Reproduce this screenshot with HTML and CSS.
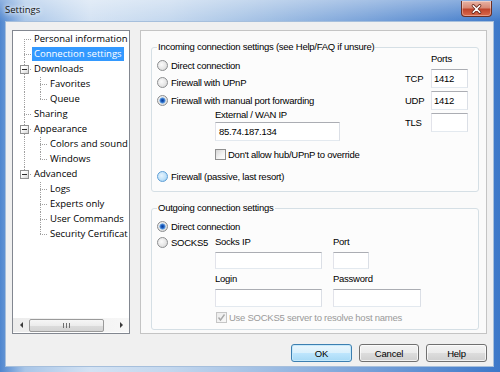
FILE: index.html
```html
<!DOCTYPE html>
<html>
<head>
<meta charset="utf-8">
<title>Settings</title>
<link rel="stylesheet" href="styles.css">
</head>
<body>
<div class="win">
  <div class="titlebar">
    <span class="title">Settings</span>
    <span class="close">
      <svg width="31" height="16" viewBox="0 0 31 16">
        <path d="M12 4.5 L19 11.5 M19 4.5 L12 11.5" stroke="#6b2a1e" stroke-width="3.4" stroke-linecap="round" fill="none"/>
        <path d="M12 4.5 L19 11.5 M19 4.5 L12 11.5" stroke="#ffffff" stroke-width="1.7" stroke-linecap="round" fill="none"/>
      </svg>
    </span>
  </div>
  <div class="client">
    <div class="main">
      <div class="tree">
        <div class="list">
          <div class="row"><i class="g first"></i><span class="t">Personal information</span></div>
          <div class="row"><i class="g tee"></i><span class="t sel">Connection settings</span></div>
          <div class="row"><i class="g tee"><b class="box"></b></i><span class="t">Downloads</span></div>
          <div class="row"><i class="g pipe"></i><i class="g tee"></i><span class="t">Favorites</span></div>
          <div class="row"><i class="g pipe"></i><i class="g last"></i><span class="t">Queue</span></div>
          <div class="row"><i class="g tee"></i><span class="t">Sharing</span></div>
          <div class="row"><i class="g tee"><b class="box"></b></i><span class="t">Appearance</span></div>
          <div class="row"><i class="g pipe"></i><i class="g tee"></i><span class="t">Colors and sound</span></div>
          <div class="row"><i class="g pipe"></i><i class="g last"></i><span class="t">Windows</span></div>
          <div class="row"><i class="g last"><b class="box"></b></i><span class="t">Advanced</span></div>
          <div class="row"><i class="g blank"></i><i class="g tee"></i><span class="t">Logs</span></div>
          <div class="row"><i class="g blank"></i><i class="g tee"></i><span class="t">Experts only</span></div>
          <div class="row"><i class="g blank"></i><i class="g tee"></i><span class="t">User Commands</span></div>
          <div class="row"><i class="g blank"></i><i class="g last"></i><span class="t">Security Certificat</span></div>
        </div>
        <div class="hscroll">
          <span class="arr"><span class="tri-l"></span></span>
          <span class="thumb">
            <svg width="7" height="5" viewBox="0 0 7 5"><path d="M0.5 0 V5 M3.5 0 V5 M6.5 0 V5" stroke="#6f6f6f" stroke-width="1"/></svg>
          </span>
          <span class="track"></span>
          <span class="arr"><span class="tri-r"></span></span>
        </div>
      </div>

      <div class="panel">
        <fieldset class="group g1">
          <legend>Incoming connection settings (see Help/FAQ if unsure)</legend>
          <div class="g1-body">
            <div class="modes">
              <label class="opt"><span class="radio"></span>Direct connection</label>
              <label class="opt r2"><span class="radio"></span>Firewall with UPnP</label>
              <label class="opt r3"><span class="radio on"></span>Firewall with manual port forwarding</label>
              <div class="wan">
                <div class="cap">External / WAN IP</div>
                <div class="field wanip">85.74.187.134</div>
                <label class="chk-row wanchk"><span class="chk"></span>Don't allow hub/UPnP to override</label>
              </div>
              <label class="opt r4"><span class="radio hot"></span>Firewall (passive, last resort)</label>
            </div>
            <div class="ports">
              <span class="ports-cap">Ports</span>
              <span class="plabel">TCP</span><div class="field port">1412</div>
              <span class="plabel">UDP</span><div class="field port">1412</div>
              <span class="plabel">TLS</span><div class="field port"></div>
            </div>
          </div>
        </fieldset>

        <fieldset class="group g2">
          <legend>Outgoing connection settings</legend>
          <label class="opt"><span class="radio on"></span>Direct connection</label>
          <div class="socks">
            <label class="opt socks5"><span class="radio"></span>SOCKS5</label>
            <div class="socks-grid">
              <span class="cap">Socks IP</span><span class="cap">Port</span>
              <div class="field ip"></div><div class="field sport"></div>
              <span class="cap">Login</span><span class="cap">Password</span>
              <div class="field ip"></div><div class="field pw"></div>
              <label class="chk-row dis"><span class="chk on">
                <svg width="9" height="9" viewBox="0 0 9 9"><path d="M1.5 4.5 L3.5 7 L7.5 1.5" stroke="#a9a9a9" stroke-width="1.4" fill="none"/></svg>
              </span>Use SOCKS5 server to resolve host names</label>
            </div>
          </div>
        </fieldset>
      </div>
    </div>

    <div class="buttons">
      <button class="btn ok" type="button">OK</button>
      <button class="btn cancel" type="button">Cancel</button>
      <button class="btn help" type="button">Help</button>
    </div>
  </div>
</div>
</body>
</html>
```

FILE: styles.css
```css
* { box-sizing: border-box; }

html, body {
  margin: 0;
  padding: 0;
  width: 500px;
  height: 372px;
  overflow: hidden;
}

.win {
  width: 500px;
  height: 372px;
  display: flex;
  flex-direction: column;
  padding: 0 7px 6px 6px;
  background:
    linear-gradient(180deg, rgba(255,255,255,0.35) 0, rgba(255,255,255,0) 22px),
    linear-gradient(90deg, #4f86cf 0%, #a9c6e8 5%, #d3e2f3 18%, #c3d7ee 34%, #a2c0e4 52%, #7aa3d9 72%, #3d78c9 100%);
  font-family: "Liberation Sans", Arial, sans-serif;
  font-size: 9.5px;
  letter-spacing: -0.25px;
  color: #000;
}

/* title bar */
.titlebar {
  height: 22px;
  flex: none;
  display: flex;
  align-items: flex-start;
}

.title {
  font-family: "Open Sans", sans-serif;
  font-size: 9.5px;
  letter-spacing: 0;
  line-height: 20px;
  margin-left: -1px;
  color: #111;
  text-shadow: 0 0 4px #ffffff, 0 0 6px #ffffff;
}

.close {
  margin-left: auto;
  margin-right: 1px;
  margin-top: 1px;
  width: 31px;
  height: 16px;
  border: 1px solid #6b2f24;
  border-top: none;
  border-radius: 0 0 4px 4px;
  background: linear-gradient(180deg, #e8b4a6 0%, #d88a76 45%, #c0452c 55%, #d9694c 100%);
  box-shadow: inset 0 0 0 1px rgba(255,255,255,0.35);
  display: flex;
}

/* client */
.client {
  flex: 1;
  background: #f0f0f0;
  padding: 8px 6px 4px 6px;
  display: flex;
  flex-direction: column;
  box-shadow: 0 0 0 1px #a6bfdc;
}

.main {
  height: 304px;
  flex: none;
  display: flex;
  gap: 10px;
}

/* tree */
.tree {
  width: 118px;
  flex: none;
  border: 1px solid #828790;
  background: #fff;
  display: flex;
  flex-direction: column;
  overflow: hidden;
}

.list {
  flex: 1;
  padding: 1px 0 0 3px;
  white-space: nowrap;
  overflow: hidden;
  font-family: "Open Sans", sans-serif;
  font-size: 9.5px;
  letter-spacing: 0;
}

.row {
  display: flex;
  height: 15px;
}

.g {
  position: relative;
  width: 16px;
  height: 15px;
  flex: none;
}

.g::before {
  content: "";
  position: absolute;
  left: 8px;
  top: 0;
  bottom: 0;
  width: 1px;
  background: repeating-linear-gradient(180deg, #a0a0a0 0 1px, transparent 1px 2px);
}

.g::after {
  content: "";
  position: absolute;
  left: 8px;
  top: 7px;
  width: 8px;
  height: 1px;
  background: repeating-linear-gradient(90deg, #a0a0a0 0 1px, transparent 1px 2px);
}

.g.first::before { top: 7px; }
.g.last::before { bottom: 7px; }
.g.pipe::after { display: none; }
.g.blank::before, .g.blank::after { display: none; }

.box {
  position: absolute;
  left: 4px;
  top: 3px;
  width: 9px;
  height: 9px;
  border: 1px solid #919191;
  background: linear-gradient(135deg, #ffffff 30%, #d6d6d6 100%);
  z-index: 1;
}

.box::after {
  content: "";
  position: absolute;
  left: 1px;
  top: 3px;
  width: 5px;
  height: 1px;
  background: #2b2b2b;
}

.t {
  line-height: 14px;
  height: 14px;
  margin-top: 0;
  padding: 0 2px;
  color: #000;
}

.t.sel {
  background: #3399ff;
  color: #fff;
}

.hscroll {
  height: 14px;
  flex: none;
  display: flex;
  align-items: center;
  background: linear-gradient(90deg, #ececec, #f7f7f7);
  margin-bottom: 1px;
}

.arr {
  width: 16px;
  height: 14px;
  flex: none;
  display: flex;
  align-items: center;
  justify-content: center;
}

.tri-l {
  width: 0; height: 0;
  border-top: 3px solid transparent;
  border-bottom: 3px solid transparent;
  border-right: 3px solid #3a3a3a;
}

.tri-r {
  width: 0; height: 0;
  border-top: 3px solid transparent;
  border-bottom: 3px solid transparent;
  border-left: 3px solid #3a3a3a;
}

.thumb {
  width: 75px;
  height: 13px;
  flex: none;
  border: 1px solid #9a9a9a;
  border-radius: 2px;
  background: linear-gradient(180deg, #f6f6f6 0%, #ececec 50%, #dcdcdc 51%, #d4d4d4 100%);
  display: flex;
  align-items: center;
  justify-content: center;
}

.track { flex: 1; }

/* right panel */
.panel {
  flex: 1;
  border: 1px solid #c4c4c4;
  background: #fafafa;
  padding: 9px 7px 3px 10px;
  display: flex;
  flex-direction: column;
}

.group {
  margin: 0;
  min-width: 0;
  border: 1px solid #d5dfe5;
  border-radius: 3px;
  padding: 3px 10px 7px 5px;
  background: #fcfcfc;
}

.group legend {
  padding: 0 1px;
  line-height: 14px;
  height: 14px;
}

.g2 {
  margin-top: 9px;
  padding-bottom: 4px;
}

.g1-body {
  display: flex;
}

.modes {
  flex: 1;
  display: flex;
  flex-direction: column;
}

.opt {
  display: flex;
  align-items: center;
  gap: 3px;
  height: 16px;
  white-space: nowrap;
}

.r2 { margin-top: 1px; }
.r3 { margin-top: 2px; }
.r4 { margin-top: 7px; }

.radio {
  width: 11px;
  height: 11px;
  flex: none;
  border-radius: 50%;
  border: 1px solid #8c8e90;
  background: radial-gradient(circle at 40% 40%, #fbfbfb 0%, #e6e6e6 55%, #cfcfcf 100%);
}

.radio.on {
  background:
    radial-gradient(circle at 50% 50%, #0b3f9a 0, #1f5fc0 1.6px, #6fa9e3 2.8px, rgba(255,255,255,0) 3.4px),
    radial-gradient(circle at 40% 40%, #fbfbfb 0%, #e6e6e6 55%, #cfcfcf 100%);
}

.radio.hot {
  border-color: #5f9fd6;
  background: radial-gradient(circle at 40% 40%, #e7f4fd 0%, #bfe1f9 55%, #8cc5ef 100%);
}

.wan {
  margin-left: 58px;
  display: flex;
  flex-direction: column;
}

.cap {
  height: 14px;
  line-height: 14px;
  white-space: nowrap;
}

.field {
  background: #fff;
  border: 1px solid;
  border-color: #abadb3 #dbdfe6 #e3e9ef #e2e3ea;
  display: flex;
  align-items: center;
  padding: 0 3px;
}

.wanip {
  width: 125px;
  height: 19px;
}

.chk-row {
  display: flex;
  align-items: center;
  gap: 2px;
  white-space: nowrap;
}

.wanchk {
  margin-top: 6px;
  height: 14px;
}

.chk {
  width: 11px;
  height: 11px;
  flex: none;
  border: 1px solid #8f8f8f;
  background: linear-gradient(135deg, #d6d6d6 0%, #f4f4f4 60%, #ffffff 100%);
  display: flex;
  align-items: center;
  justify-content: center;
}

.chk.on {
  border-color: #c6c6c6;
  background: linear-gradient(135deg, #ececec 0%, #f8f8f8 100%);
}

.chk-row.dis { color: #9a9a9a; }

.ports {
  flex: none;
  margin-top: -5px;
  display: grid;
  grid-template-columns: 26px 37px;
  grid-template-rows: 14px 19px 19px 19px;
  row-gap: 3px;
  align-items: center;
}

.ports-cap {
  grid-column: 2;
  line-height: 14px;
}

.plabel {
  grid-column: 1;
  line-height: 19px;
}

.port {
  grid-column: 2;
  height: 19px;
  padding-left: 2px;
}

.socks {
  display: flex;
  align-items: flex-start;
}

.socks5 {
  width: 58px;
  flex: none;
}

.socks-grid {
  display: grid;
  grid-template-columns: 107px 88px;
  grid-template-rows: 16px 17px 16px 18px 16px;
  column-gap: 11px;
  row-gap: 2px;
}

.socks-grid .cap {
  height: 16px;
  line-height: 16px;
}

.ip { width: 107px; }
.sport { width: 36px; }
.pw { width: 88px; }

.socks-grid .chk-row {
  grid-column: 1 / -1;
  height: 16px;
  padding-left: 1px;
}

/* buttons */
.buttons {
  margin-top: 10px;
  display: flex;
  justify-content: flex-end;
  gap: 7px;
}

.btn {
  height: 18px;
  margin: 0;
  padding: 0;
  font-family: "Liberation Sans", Arial, sans-serif;
  font-size: 9.5px;
  letter-spacing: -0.2px;
  color: #000;
  border: 1px solid #707070;
  border-radius: 3px;
  background: linear-gradient(180deg, #f3f3f3 0%, #ebebeb 50%, #dddddd 51%, #cfcfcf 100%);
  box-shadow: inset 0 0 0 1px rgba(255,255,255,0.7);
}

.ok {
  width: 61px;
  border-color: #3c7fb1;
  background: linear-gradient(180deg, #eaf6fd 0%, #d9f0fc 50%, #bee6fd 51%, #a7d9f5 100%);
  box-shadow: inset 0 0 0 1px #c6e9fb;
}

.cancel { width: 60px; }
.help { width: 61px; }
```
